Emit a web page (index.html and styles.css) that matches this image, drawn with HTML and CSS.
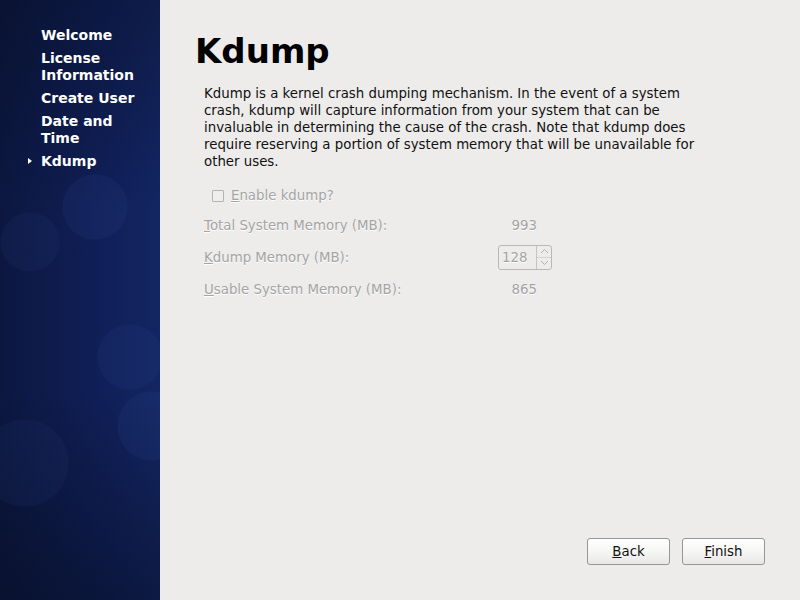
FILE: index.html
```html
<!DOCTYPE html>
<html>
<head>
<meta charset="utf-8">
<link rel="stylesheet" href="styles.css">
</head>
<body>
<div class="app">
  <aside class="sidebar">
    <ul class="steps">
      <li>Welcome</li>
      <li>License<br>Information</li>
      <li>Create User</li>
      <li>Date and<br>Time</li>
      <li class="current">Kdump</li>
    </ul>
  </aside>
  <main class="main">
    <h1 class="title">Kdump</h1>
    <div class="content">
      <p class="desc">Kdump is a kernel crash dumping mechanism. In the event of a system crash, kdump will capture information from your system that can be invaluable in determining the cause of the crash. Note that kdump does require reserving a portion of system memory that will be unavailable for other uses.</p>
      <label class="check"><span class="box"></span><span><u>E</u>nable kdump?</span></label>
      <div class="form">
        <div class="lbl"><u>T</u>otal System Memory (MB):</div>
        <div class="val">993</div>
        <div class="lbl"><u>K</u>dump Memory (MB):</div>
        <div class="spin"><span class="spin-text">128</span><span class="spin-btns"><span class="arr">
          <svg width="9" height="6" viewBox="0 0 9 6"><path d="M1 5 L4.5 1.5 L8 5" fill="none" stroke="#b0b0b0" stroke-width="1"/></svg></span><span class="arr">
          <svg width="9" height="6" viewBox="0 0 9 6"><path d="M1 1 L4.5 4.5 L8 1" fill="none" stroke="#b0b0b0" stroke-width="1"/></svg></span></span></div>
        <div class="lbl"><u>U</u>sable System Memory (MB):</div>
        <div class="val">865</div>
      </div>
    </div>
    <div class="buttons">
      <button class="btn"><u>B</u>ack</button>
      <button class="btn"><u>F</u>inish</button>
    </div>
  </main>
</div>
</body>
</html>
```
FILE: styles.css
```css
html, body {
  margin: 0;
  padding: 0;
  width: 800px;
  height: 600px;
  overflow: hidden;
  font-family: "DejaVu Sans", sans-serif;
  font-size: 13.33px;
}
.app {
  display: flex;
  width: 800px;
  height: 600px;
}
.sidebar {
  width: 160px;
  flex: none;
  background:
    radial-gradient(circle at 95px 207px, rgba(60,90,170,0.10) 0 32px, transparent 33px),
    radial-gradient(circle at 30px 242px, rgba(60,90,170,0.08) 0 29px, transparent 30px),
    radial-gradient(circle at 130px 357px, rgba(60,90,170,0.09) 0 32px, transparent 33px),
    radial-gradient(circle at 152px 426px, rgba(60,90,170,0.10) 0 34px, transparent 35px),
    radial-gradient(circle at 25px 463px, rgba(60,90,170,0.08) 0 43px, transparent 44px),
    linear-gradient(to bottom, rgba(5,10,25,0.35) 0%, rgba(0,0,0,0) 35%, rgba(0,0,0,0) 65%, rgba(5,10,25,0.45) 100%),
    linear-gradient(to right, #0c1740 0%, #10205a 70%, #132663 100%);
}
.steps {
  list-style: none;
  margin: 0;
  padding: 27px 0 0 41px;
  display: flex;
  flex-direction: column;
  gap: 6px;
}
.steps li {
  color: #ffffff;
  font-weight: bold;
  font-size: 14px;
  line-height: 17px;
  position: relative;
}
.steps li.current::before {
  content: "";
  position: absolute;
  left: -13px;
  top: 5px;
  border-left: 4px solid #fff;
  border-top: 3.5px solid transparent;
  border-bottom: 3.5px solid transparent;
}
.main {
  flex: 1;
  background: #edeceb;
  display: flex;
  flex-direction: column;
  padding: 0 35px 0 35px;
}
.title {
  margin: 29px 0 0 0;
  font-size: 34px;
  line-height: 44px;
  font-weight: bold;
  color: #000;
}
.content {
  padding-left: 9px;
  flex: 1;
}
.desc {
  margin: 12px 0 0 0;
  width: 495px;
  line-height: 17px;
  color: #111;
}
.check {
  display: flex;
  align-items: center;
  gap: 7px;
  margin: 17px 0 0 8px;
  color: #a4a4a4;
  text-shadow: 0 1px 0 #fff;
  line-height: 17px;
}
.box {
  width: 10px;
  height: 10px;
  border: 1px solid #b4b4b4;
  border-radius: 1px;
  background: #efeeed;
}
.form {
  display: grid;
  grid-template-columns: 294px 54px;
  grid-auto-rows: 32px;
  align-items: center;
  margin-top: 5px;
  color: #a4a4a4;
  text-shadow: 0 1px 0 #fff;
}
.val {
  text-align: right;
  padding-right: 15px;
}
.spin {
  height: 25px;
  box-sizing: border-box;
  border: 1px solid #b8b8b8;
  border-radius: 3px;
  display: flex;
  background: #edeceb;
}
.spin-text {
  flex: 1;
  line-height: 23px;
  padding-left: 3px;
}
.spin-btns {
  width: 14px;
  border-left: 1px solid #c4c4c4;
  display: flex;
  flex-direction: column;
}
.arr {
  flex: 1;
  display: flex;
  align-items: center;
  justify-content: center;
}
.arr + .arr {
  border-top: 1px solid #d4d4d4;
}
.buttons {
  display: flex;
  justify-content: flex-end;
  gap: 12px;
  margin-bottom: 35px;
}
.btn {
  width: 83px;
  height: 27px;
  font-family: "DejaVu Sans", sans-serif;
  font-size: 13.33px;
  color: #111;
  background: linear-gradient(to bottom, #ffffff 0%, #f6f6f5 50%, #e8e7e6 100%);
  border: 1px solid #969696;
  border-radius: 3px;
  padding: 0;
}
```
